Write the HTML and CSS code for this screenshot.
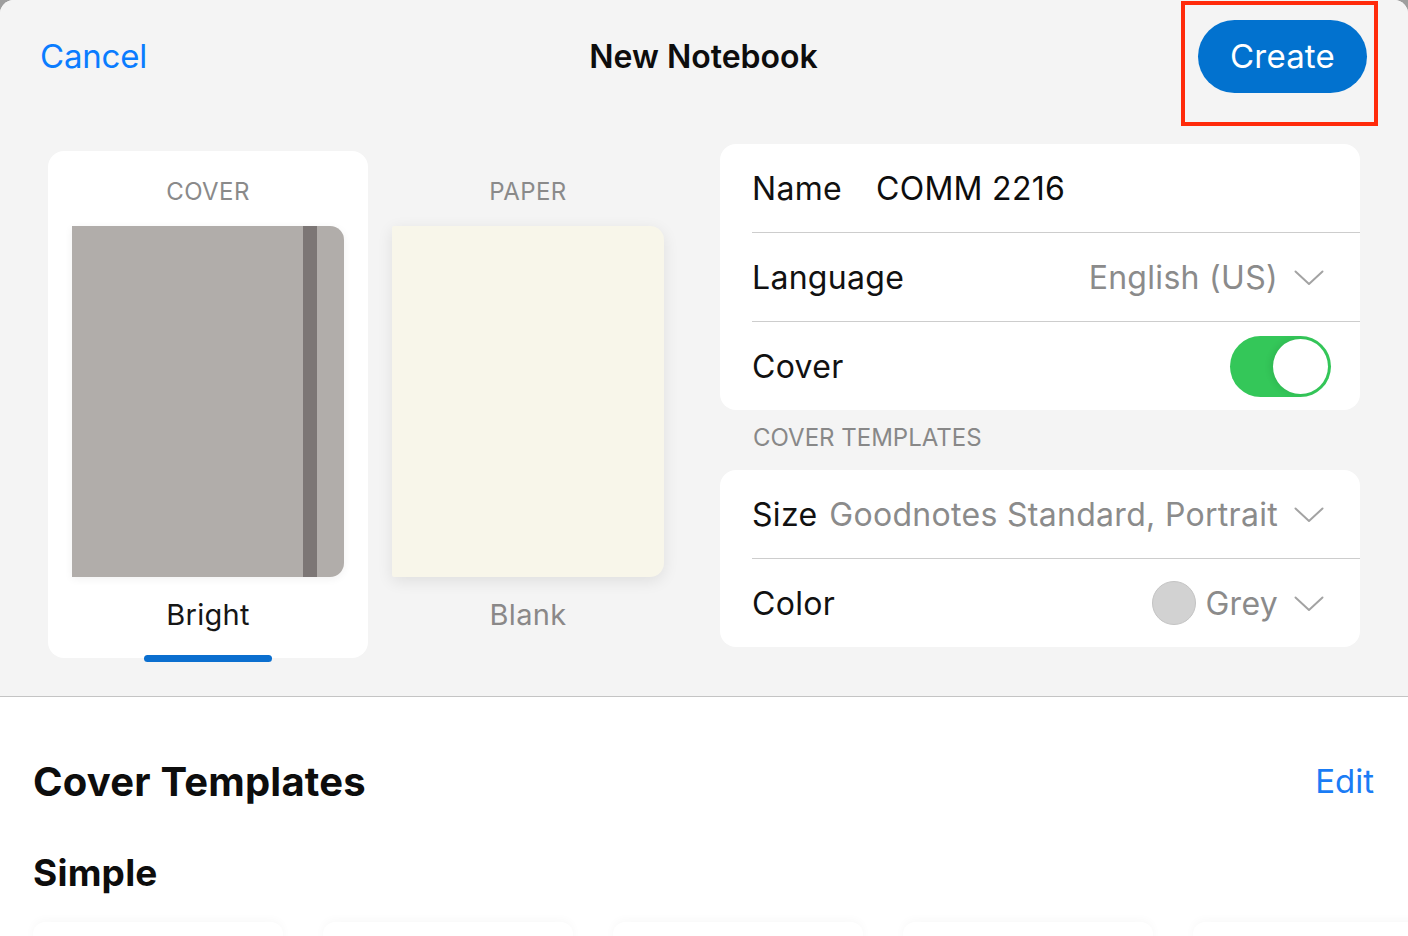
FILE: index.html
```html
<!DOCTYPE html>
<html lang="en">
<head>
<meta charset="utf-8">
<title>New Notebook</title>
<link rel="stylesheet" href="styles.css">
</head>
<body>
<div class="sheet">
  <section class="top">
    <header class="header">
      <a class="cancel">Cancel</a>
      <h1 class="title">New Notebook</h1>
      <div class="create-wrap">
        <button class="create">Create</button>
        <span class="highlight"></span>
      </div>
    </header>
    <div class="content">
      <div class="pickers">
        <div class="tile selected">
          <div class="tile-label">COVER</div>
          <div class="cover-img"><span class="band"></span></div>
          <div class="tile-name">Bright</div>
          <span class="indicator"></span>
        </div>
        <div class="tile">
          <div class="tile-label">PAPER</div>
          <div class="paper-img"></div>
          <div class="tile-name muted">Blank</div>
        </div>
      </div>
      <div class="settings">
        <div class="group">
          <div class="row">
            <span class="row-label">Name</span>
            <span class="row-input">COMM 2216</span>
          </div>
          <div class="row">
            <span class="row-label">Language</span>
            <span class="row-value">English (US)</span>
            <svg class="chev" viewBox="0 0 30 16" width="30" height="16"><path d="M1.5 1.5 L15 14 L28.5 1.5" fill="none" stroke="#a3a3a3" stroke-width="2" stroke-linecap="round" stroke-linejoin="round"/></svg>
          </div>
          <div class="row">
            <span class="row-label">Cover</span>
            <span class="toggle"><span class="knob"></span></span>
          </div>
        </div>
        <div class="group-title">COVER TEMPLATES</div>
        <div class="group">
          <div class="row">
            <span class="row-label">Size</span>
            <span class="row-value">Goodnotes Standard, Portrait</span>
            <svg class="chev" viewBox="0 0 30 16" width="30" height="16"><path d="M1.5 1.5 L15 14 L28.5 1.5" fill="none" stroke="#a3a3a3" stroke-width="2" stroke-linecap="round" stroke-linejoin="round"/></svg>
          </div>
          <div class="row">
            <span class="row-label">Color</span>
            <span class="swatch"></span>
            <span class="row-value tight">Grey</span>
            <svg class="chev" viewBox="0 0 30 16" width="30" height="16"><path d="M1.5 1.5 L15 14 L28.5 1.5" fill="none" stroke="#a3a3a3" stroke-width="2" stroke-linecap="round" stroke-linejoin="round"/></svg>
          </div>
        </div>
      </div>
    </div>
  </section>
  <section class="bottom">
    <div class="section-head">
      <h2 class="section-title">Cover Templates</h2>
      <a class="edit">Edit</a>
    </div>
    <h3 class="sub-title">Simple</h3>
    <div class="templates">
      <div class="tpl"></div>
      <div class="tpl"></div>
      <div class="tpl"></div>
      <div class="tpl"></div>
      <div class="tpl"></div>
    </div>
  </section>
</div>
</body>
</html>
```

FILE: styles.css
```css
* { box-sizing: border-box; }
html, body {
  margin: 0;
  padding: 0;
  width: 1408px;
  height: 936px;
  overflow: hidden;
  background: #9e9e9e;
  font-family: Inter, "Noto Sans", "Liberation Sans", sans-serif;
  color: #111;
}
.sheet {
  width: 1408px;
  height: 936px;
  border-radius: 14px 14px 0 0;
  overflow: hidden;
  background: #fff;
}
.top {
  height: 697px;
  background: #f4f4f4;
  border-bottom: 1px solid #c4c4c4;
}
.header {
  height: 144px;
  display: grid;
  grid-template-columns: 1fr auto 1fr;
  align-items: start;
  padding: 20px 41px 0 40px;
}
.cancel {
  font-size: 33px;
  line-height: 73px;
  color: #0a7cff;
  letter-spacing: -0.2px;
}
.title {
  margin: 0;
  font-size: 32px;
  font-weight: 600;
  line-height: 73px;
  letter-spacing: 0;
  color: #0d0d0d;
}
.create-wrap {
  justify-self: end;
  position: relative;
}
.create {
  display: block;
  width: 169px;
  height: 73px;
  border: none;
  border-radius: 37px;
  background: #0272cf;
  color: #fff;
  font-family: inherit;
  font-size: 33px;
  font-weight: 400;
  padding: 0 0 2px;
  letter-spacing: 0.2px;
}
.highlight {
  position: absolute;
  left: -17px;
  top: -19px;
  right: -11px;
  bottom: -33px;
  border: 4px solid #ff2a0a;
}
.content {
  display: flex;
  gap: 32px;
  padding: 0 48px;
}
.pickers {
  display: flex;
  margin-top: 7px;
}
.tile {
  position: relative;
  width: 320px;
  height: 507px;
  border-radius: 16px;
  display: flex;
  flex-direction: column;
  align-items: center;
  padding-top: 26px;
}
.tile.selected { background: #fff; }
.tile-label {
  font-size: 24px;
  line-height: 30px;
  color: #8a8a8a;
  letter-spacing: 0.4px;
  margin-bottom: 19px;
}
.cover-img {
  position: relative;
  width: 272px;
  height: 351px;
  background: #b1adaa;
  border-radius: 0 14px 14px 0;
  box-shadow: 0 2px 8px rgba(0,0,0,0.06);
}
.band {
  position: absolute;
  left: 231px;
  top: 0;
  bottom: 0;
  width: 14px;
  background: #7c7675;
}
.paper-img {
  width: 272px;
  height: 351px;
  background: #f8f6ea;
  border-radius: 2px 14px 14px 2px;
  box-shadow: 0 4px 16px rgba(0,0,0,0.09);
}
.tile-name {
  margin-top: 21px;
  font-size: 29px;
  line-height: 34px;
  letter-spacing: 0.3px;
  color: #161616;
}
.tile-name.muted { color: #8a8888; }
.indicator {
  position: absolute;
  left: 96px;
  bottom: -4px;
  width: 128px;
  height: 7px;
  border-radius: 4px;
  background: #0b6fcf;
}
.settings {
  flex: 1;
  display: flex;
  flex-direction: column;
}
.group {
  background: #fff;
  border-radius: 16px;
  overflow: hidden;
}
.row {
  display: flex;
  align-items: center;
  height: 88px;
  margin-left: 32px;
  padding-right: 36px;
  font-size: 32px;
  letter-spacing: 0.3px;
}
.row + .row {
  height: 89px;
  border-top: 1px solid #cdcdcd;
}
.row-label { color: #111; }
.row-input {
  margin-left: 34px;
  color: #0d0d0d;
}
.row-value {
  margin-left: auto;
  margin-right: 16px;
  color: #8b8b8b;
}
.row-value.tight { margin-left: 9px; }
.chev { display: block; margin-top: 2px; }
.toggle {
  margin-left: auto;
  margin-right: -7px;
  width: 101px;
  height: 61px;
  border-radius: 31px;
  background: #34c759;
  position: relative;
}
.knob {
  position: absolute;
  right: 3px;
  top: 3px;
  width: 55px;
  height: 55px;
  border-radius: 50%;
  background: #fff;
  box-shadow: -3px 0 6px rgba(0,0,0,0.08);
}
.swatch {
  margin-left: auto;
  width: 44px;
  height: 44px;
  border-radius: 50%;
  background: #d2d2d2;
  border: 1px solid #c4c4c4;
}
.group-title {
  height: 60px;
  padding: 13px 0 0 33px;
  font-size: 24px;
  line-height: 30px;
  color: #888;
  letter-spacing: 0;
}
.bottom {
  padding: 0 34px 0 33px;
}
.section-head {
  display: flex;
  justify-content: space-between;
  align-items: center;
  margin-top: 56px;
  height: 56px;
}
.section-title {
  margin: 0;
  font-size: 40px;
  font-weight: 700;
  letter-spacing: 0.2px;
  color: #0d0d0d;
}
.edit {
  font-size: 33px;
  color: #1a7cf5;
  letter-spacing: 0;
}
.sub-title {
  margin: 40px 0 0;
  font-size: 37px;
  line-height: 48px;
  font-weight: 700;
  letter-spacing: 0.2px;
  color: #0d0d0d;
}
.templates {
  display: flex;
  gap: 40px;
  margin-top: 25px;
}
.tpl {
  flex: 0 0 250px;
  height: 300px;
  background: #fff;
  border-radius: 12px;
  box-shadow: 0 -2px 10px rgba(0,0,0,0.03);
}
```
